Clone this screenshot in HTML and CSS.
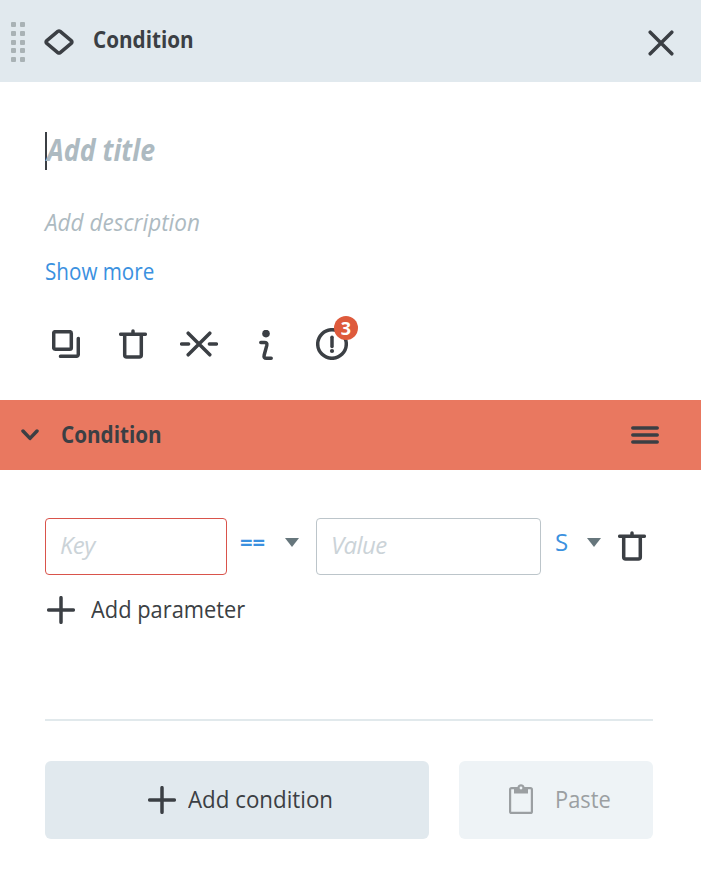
FILE: index.html
```html
<!DOCTYPE html>
<html lang="en">
<head>
    <meta charset="UTF-8">
    <meta name="viewport" content="width=device-width, initial-scale=1.0">
    <title>Condition</title>
    <link rel="stylesheet" href="styles.css">
</head>
<body>
    <svg class="symbols" width="0" height="0">
        <symbol id="trash" viewBox="0 0 28 32">
            <path d="M1.7 6.3h24.6M5.7 7v20q0 2 2 2h12.6q2 0 2-2V7M14 3v3"/>
        </symbol>
        <symbol id="plus" viewBox="0 0 28 28">
            <path d="M14 1.7v24.6M1.7 14h24.6"/>
        </symbol>
    </svg>

    <header class="header">
        <svg class="drag" width="14" height="41" viewBox="0 0 14 41">
            <g fill="#a9b2b5">
                <rect x="0" y="0" width="5" height="5" rx="1"/><rect x="9" y="0" width="5" height="5" rx="1"/>
                <rect x="0" y="9" width="5" height="5" rx="1"/><rect x="9" y="9" width="5" height="5" rx="1"/>
                <rect x="0" y="18" width="5" height="5" rx="1"/><rect x="9" y="18" width="5" height="5" rx="1"/>
                <rect x="0" y="26" width="5" height="5" rx="1"/><rect x="9" y="26" width="5" height="5" rx="1"/>
                <rect x="0" y="35" width="5" height="5" rx="1"/><rect x="9" y="35" width="5" height="5" rx="1"/>
            </g>
        </svg>
        <svg class="icon diamond" width="30" height="26" viewBox="0 0 30 26">
            <path d="M13.8 2.4 2.8 11.6q-1.5 1.4 0 2.8l11 9.2q1.2.9 2.4 0l11-9.2q1.5-1.4 0-2.8l-11-9.2q-1.2-.9-2.4 0Z"/>
        </svg>
        <h1 class="heading">Condition</h1>
        <svg class="icon close" width="26" height="26" viewBox="0 0 26 26">
            <path d="m2.2 2.2 21.6 21.6M23.8 2.2 2.2 23.8"/>
        </svg>
    </header>

    <section class="info">
        <div class="title"><span class="text">Add title</span></div>
        <div class="description"><span class="text">Add description</span></div>
        <a class="more"><span class="text">Show more</span></a>
        <div class="tools">
            <svg class="icon" width="28" height="28" viewBox="0 0 28 28">
                <rect x="1.7" y="1.7" width="17.6" height="17.6" rx="1.5"/>
                <path d="M26.3 8.5v15.8q0 2-2 2H8.5"/>
            </svg>
            <svg class="icon" width="28" height="32"><use href="#trash"/></svg>
            <svg class="icon" width="38" height="26" viewBox="0 0 38 26">
                <path d="m8.2 2.2 21.6 21.6M29.8 2.2 8.2 23.8M1.6 13h7M29.4 13h7"/>
            </svg>
            <svg class="icon" width="14" height="30" viewBox="0 0 14 30">
                <circle class="fill" cx="7" cy="3.6" r="3.8"/>
                <path d="M1.8 12.4h3.6q3 0 2.4 3L5.2 25q-.8 3.2 2.2 3.2h4.8"/>
            </svg>
            <div class="warning">
                <svg class="icon" width="32" height="32" viewBox="0 0 32 32">
                    <circle cx="16" cy="16" r="14.3"/>
                    <path d="M16 9.3v9.2"/>
                    <circle class="fill" cx="16" cy="23" r="2.1"/>
                </svg>
                <span class="badge">3</span>
            </div>
        </div>
    </section>

    <div class="section-bar">
        <svg class="icon" width="18" height="12" viewBox="0 0 18 12">
            <path d="m2 2 7 7.4L16 2"/>
        </svg>
        <h2 class="heading">Condition</h2>
        <svg class="icon burger" width="28" height="18" viewBox="0 0 28 18">
            <path d="M1.8 2h24.4M1.8 9h24.4M1.8 16h24.4"/>
        </svg>
    </div>

    <section class="params">
        <div class="param">
            <input class="input key error" type="text" placeholder="Key">
            <div class="select operator">
                <span class="equals">==</span>
                <i class="arrow"></i>
            </div>
            <input class="input value" type="text" placeholder="Value">
            <div class="select kind">
                <span class="text">S</span>
                <i class="arrow"></i>
            </div>
            <svg class="icon remove" width="28" height="32"><use href="#trash"/></svg>
        </div>
        <div class="add">
            <svg class="icon" width="28" height="28"><use href="#plus"/></svg>
            <span class="text">Add parameter</span>
        </div>
    </section>

    <footer class="footer">
        <button class="button primary">
            <svg class="icon" width="28" height="28"><use href="#plus"/></svg>
            <span class="text">Add condition</span>
        </button>
        <button class="button paste" disabled>
            <svg width="24" height="30" viewBox="0 0 24 30">
                <rect x="1.1" y="4.1" width="21.8" height="24.8" rx="1.5" fill="none" stroke="#9b9fa2" stroke-width="2.2"/>
                <path d="M5 3h3.5a3.6 3.6 0 0 1 7 0H19v6.5H5Z" fill="#9b9fa2"/>
                <circle cx="12" cy="4" r="1.4" fill="#eef3f6"/>
            </svg>
            <span class="text">Paste</span>
        </button>
    </footer>
</body>
</html>
```
FILE: styles.css
```css
*{
    box-sizing: border-box;
}
body{
    margin: 0;
    background-color: #fff;
    color: #3b3f44;
    font-family: "Open Sans", "Noto Sans", sans-serif;
    font-size: 24px;
    line-height: 32px;
}
svg{
    display: block;
    flex: none;
}
.symbols{
    position: absolute;
}
.icon{
    fill: none;
    stroke: #3b3f44;
    stroke-width: 3.5;
    stroke-linecap: round;
    stroke-linejoin: round;
}
.icon .fill{
    fill: #3b3f44;
    stroke: none;
}
.text,
.heading{
    display: inline-block;
    white-space: nowrap;
    transform-origin: left center;
}
.heading{
    margin: 0;
    font-size: 24px;
    font-weight: 700;
    transform: scaleX(.862);
}

.header{
    display: flex;
    align-items: center;
    height: 82px;
    padding: 0 27px 0 11px;
    background-color: #e1e9ee;
}
.drag{
    margin-top: 3px;
}
.diamond{
    margin: 2px 19px 0 19px;
}
.header .heading{
    margin-top: -4px;
}
.close{
    margin: 4px 0 0 auto;
}

.info{
    height: 318px;
    padding: 50px 45px 0;
}
.title{
    height: 38px;
    border-left: 2px solid #3b3f44;
    color: #adbac1;
    font-size: 30px;
    font-style: italic;
    font-weight: 700;
    line-height: 36px;
}
.title .text{
    transform: scaleX(.89);
}
.description{
    margin-top: 36px;
    color: #adbac1;
    font-style: italic;
}
.description .text{
    transform: scaleX(.938);
}
.more{
    display: block;
    margin-top: 17px;
    color: #3b91df;
}
.more .text{
    transform: scaleX(.86);
}
.tools{
    display: flex;
    align-items: center;
    height: 32px;
    margin-top: 41px;
    padding-left: 7px;
}
.tools .icon:nth-child(2){
    margin: 0 33px 1px 39px;
}
.tools .icon:nth-child(4){
    margin: 2px 43px 0 41px;
}
.warning{
    position: relative;
}
.badge{
    position: absolute;
    top: -12px;
    right: -10px;
    width: 24px;
    height: 24px;
    border-radius: 50%;
    background-color: #de5a3c;
    color: #fff;
    font-size: 18px;
    font-weight: 700;
    line-height: 24px;
    text-align: center;
}

.section-bar{
    display: flex;
    align-items: center;
    height: 70px;
    padding: 0 42px 0 21px;
    background-color: #e97860;
}
.section-bar .heading{
    margin: -2px 0 0 22px;
}
.burger{
    margin-left: auto;
}

.params{
    height: 249px;
    padding: 48px 45px 0;
}
.param{
    display: flex;
    align-items: center;
    height: 57px;
}
.input{
    height: 57px;
    padding: 0 14px 4px;
    border: 1px solid #bcc5ca;
    border-radius: 4px;
    outline: none;
    font: inherit;
}
.input::placeholder{
    color: #cbd3d8;
    font-style: italic;
    letter-spacing: -.6px;
    opacity: 1;
}
.key{
    width: 182px;
}
.value{
    width: 225px;
}
.error{
    border-color: #d9534b;
}
.select{
    display: flex;
    align-items: center;
    justify-content: space-between;
    color: #3b91df;
    margin-top: -9px;
}
.equals{
    margin: -2px 0 0 -1px;
    font-weight: 700;
    font-size: 22px;
}
.operator{
    width: 58px;
    margin-left: 14px;
    margin-right: 17px;
}
.kind{
    width: 46px;
    margin-left: 14px;
    margin-right: 17px;
}
.remove{
    margin-bottom: 2px;
}
.arrow{
    border: 7px solid transparent;
    border-top: 9px solid #66767c;
    border-bottom: 0;
}
.add{
    display: flex;
    align-items: center;
    gap: 16px;
    margin-top: 19px;
    padding-left: 2px;
}
.add .text{
    margin-top: -1px;
    transform: scaleX(.91);
}

.footer{
    display: flex;
    gap: 30px;
    margin: 0 48px 0 45px;
    padding-top: 40px;
    border-top: 2px solid #e1e9ec;
}
.button{
    display: flex;
    align-items: center;
    height: 78px;
    border: none;
    border-radius: 6px;
    background-color: #e1e9ee;
    color: #3b3f44;
    font: inherit;
}
.button .text{
    margin-top: -2px;
    transform: scaleX(.93);
}
.primary{
    width: 384px;
    padding: 0 0 0 103px;
    gap: 12px;
}
.paste{
    width: 194px;
    padding: 0 0 2px 50px;
    gap: 22px;
    background-color: #eef3f6;
    color: #9b9fa2;
}
.button.paste .text{
    margin-top: 0;
    transform: scaleX(.91);
}
```
